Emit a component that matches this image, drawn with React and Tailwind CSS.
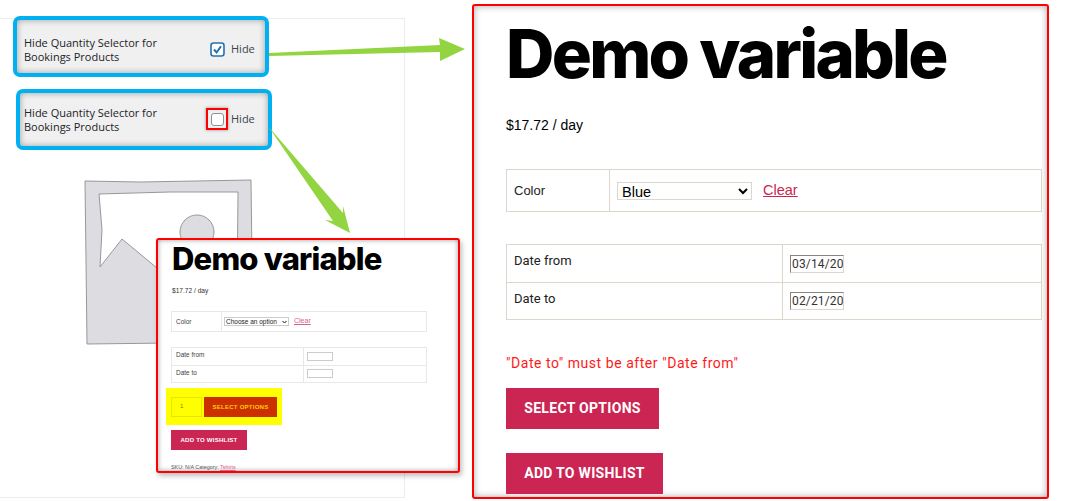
const Callout = ({ className, checked }) => (
  <div className={`absolute flex h-[61px] w-[256px] items-center rounded-[7px] border-4 border-[#00b0f0] bg-[#f0f0f0] shadow-[inset_0_0_6px_rgba(0,0,0,0.35)] ${className}`}>
    <p className="w-[186px] font-['Open_Sans',sans-serif] text-[11px] leading-[14px] text-[#1d2327]">
      Hide Quantity Selector for<br />Bookings Products
    </p>
    {checked ? (
      <svg width="15" height="15" viewBox="0 0 15 15" className="shrink-0">
        <rect x="1" y="1" width="13" height="13" rx="2.5" fill="#fff" stroke="#2271b1" strokeWidth="1.6" />
        <path d="M4 7.5l2.6 3L11 4.2" fill="none" stroke="#2271b1" strokeWidth="2" />
      </svg>
    ) : (
      <span className="relative flex h-[15px] w-[15px] shrink-0 items-center justify-center">
        <span className="h-[13px] w-[13px] rounded-[3px] border border-[#8c8f94] bg-white" />
        <span className="absolute -top-[4px] -left-[4px] h-[22px] w-[22px] border-2 border-[#ff0000] shadow-[0_0_3px_rgba(0,0,0,0.4)]" />
      </span>
    )}
    <span className="ml-[6px] font-['Open_Sans',sans-serif] text-[11px] text-[#3c434a]">Hide</span>
  </div>
)

const Arrows = () => (
  <svg width="1073" height="501" viewBox="0 0 1073 501" className="absolute top-0 left-0">
    <polygon points="269,53 440,45 439,38 465,49 440,61 440,52 269,56" fill="#92d540" />
    <polygon points="268,126 343,213 343,206 350,233 325,220 333,221" fill="#92d540" />
  </svg>
)

const Placeholder = () => (
  <svg width="170" height="168" viewBox="84 178 170 168" className="absolute top-[178px] left-[84px]">
    <polygon points="85,181 140,182 251,180 252,258 251,340 170,343 87,344 86,260" fill="#dddde1" stroke="#98989c" strokeWidth="1" />
    <polygon points="99,194 170,192 238,192 237,300 157,268 122,239 100,267 102,230" fill="#fff" stroke="#98989c" strokeWidth="1" />
    <circle cx="197" cy="232" r="17" fill="#dddde1" stroke="#98989c" strokeWidth="1" />
  </svg>
)

const SmallPanel = () => (
  <div className="absolute top-[238px] left-[156px] h-[235px] w-[304px] overflow-hidden rounded-[3px] border-2 border-[#ff0000] bg-white pt-[1px] pl-[13px] shadow-[inset_0_0_5px_rgba(0,0,0,0.4),2px_3px_5px_rgba(0,0,0,0.25)] font-['Liberation_Sans',sans-serif]">
    <h2 className="mt-[2px] ml-[1px] font-['Inter',sans-serif] text-[31px] leading-[32px] font-extrabold tracking-[-0.8px] text-black">Demo variable</h2>
    <p className="ml-[1px] mt-[11px] text-[6.6px] leading-[10px] text-[#333]">$17.72 / day</p>
    <table className="mt-[15px] h-[21px] w-[256px] table-fixed border-collapse text-[6.5px] text-[#444]">
      <tbody>
        <tr>
          <td className="w-[50px] border border-[#e8e8e4] pl-[4px]">Color</td>
          <td className="border border-[#e8e8e4] pl-[2px]">
            <span className="flex items-center">
              <span className="flex h-[9px] w-[65px] items-center justify-between border border-[#ccc] px-[1px] text-[6.5px] leading-[7px] text-[#222]">
                Choose an option
                <svg width="5" height="4" viewBox="0 0 5 4"><path d="M0.5 1l2 2 2-2" fill="none" stroke="#111" strokeWidth="1" /></svg>
              </span>
              <span className="ml-[5px] text-[7px] text-[#d9608a] underline">Clear</span>
            </span>
          </td>
        </tr>
      </tbody>
    </table>
    <table className="mt-[15px] h-[36px] w-[256px] table-fixed border-collapse text-[6.5px] text-[#444]">
      <tbody>
        {['Date from', 'Date to'].map((label) => (
          <tr key={label}>
            <td className="w-[132px] border border-[#e8e8e4] pl-[4px] align-top leading-[14px]">{label}</td>
            <td className="border border-[#e8e8e4] pl-[3px]">
              <span className="block h-[9px] w-[26px] border border-[#ccc]" />
            </td>
          </tr>
        ))}
      </tbody>
    </table>
    <div className="-ml-[5px] mt-[5px] flex h-[37px] w-[116px] items-center gap-[2px] bg-[#ffff00] pl-[5px]">
      <span className="flex h-[20px] w-[31px] items-center border border-[#e6e600] pl-[8px] text-[6px] text-[#808000]">1</span>
      <span className="flex h-[20px] w-[73px] items-center justify-center bg-[#cc3000] text-[6.1px] font-bold tracking-[0.2px] text-[#ffcc00]">SELECT OPTIONS</span>
    </div>
    <div className="mt-[5px] flex h-[20px] w-[76px] items-center justify-center bg-[#cb2553] text-[6.1px] font-bold tracking-[0.2px] text-white">ADD TO WISHLIST</div>
    <p className="mt-[13px] text-[5.4px] leading-[8px] text-[#555]">
      SKU: N/A Category: <span className="text-[#d9608a] underline">Tshirts</span>
    </p>
  </div>
)

const BigPanel = () => (
  <div className="absolute top-[4px] left-[472px] h-[495px] w-[577px] overflow-hidden rounded-[3px] border-2 border-[#ff0000] bg-white pl-[32px] shadow-[inset_0_0_7px_rgba(0,0,0,0.35)] font-['Roboto',sans-serif]">
    <h1 className="mt-[13px] font-['Inter',sans-serif] text-[67px] leading-[70px] font-extrabold tracking-[-2.75px] text-black">Demo variable</h1>
    <p className="mt-[27px] font-['Liberation_Sans',sans-serif] text-[14px] leading-[18px] text-black">$17.72 / day</p>
    <table className="mt-[35px] h-[43px] w-[536px] table-fixed border-collapse text-[13px] text-[#222]">
      <tbody>
        <tr>
          <td className="w-[103px] border border-[#dcd7ca] pl-[7px] font-['Liberation_Sans',sans-serif]">Color</td>
          <td className="border border-[#dcd7ca] pl-[7px]">
            <div className="flex items-center">
              <select defaultValue="Blue" className="h-[18px] w-[135px] border border-[#dcd7ca] bg-white pb-[2px] font-['Liberation_Sans',sans-serif] text-[14.5px] leading-[14px] text-black">
                <option>Blue</option>
              </select>
              <a className="ml-[11px] font-['Liberation_Sans',sans-serif] text-[14.5px] text-[#cb2553] underline">Clear</a>
            </div>
          </td>
        </tr>
      </tbody>
    </table>
    <table className="mt-[32px] h-[76px] w-[536px] table-fixed border-collapse text-[13px] text-[#222]">
      <tbody>
        {[['Date from', '03/14/20'], ['Date to', '02/21/20']].map(([label, value]) => (
          <tr key={label}>
            <td className="w-[276px] border border-[#dcd7ca] pt-[7px] pl-[7px] align-top leading-[18px]">{label}</td>
            <td className="border border-[#dcd7ca] pl-[7px]">
              <input readOnly value={value} className="h-[18px] w-[54px] border border-[#dcd7ca] border-t-[#8a8578] border-l-[#8a8578] pl-[1px] font-['Roboto',sans-serif] text-[12px] tracking-[0.15px] text-[#333]" />
            </td>
          </tr>
        ))}
      </tbody>
    </table>
    <p className="mt-[33px] text-[14px] leading-[20px] tracking-[0.55px] text-[#ff1a1a]">"Date to" must be after "Date from"</p>
    <div className="mt-[15px] flex h-[41px] w-[153px] items-center justify-center bg-[#cb2553] text-[14px] font-bold tracking-[0.3px] text-white">SELECT OPTIONS</div>
    <div className="mt-[24px] flex h-[41px] w-[157px] items-center justify-center bg-[#cb2553] text-[14px] font-bold tracking-[0.3px] text-white">ADD TO WISHLIST</div>
  </div>
)

const App = () => {
  return (
    <div className="relative h-[501px] w-[1073px] overflow-hidden bg-white">
      <div className="absolute top-[18px] left-0 h-[480px] w-[405px] border-y border-r border-[#ececec]" />
      <Placeholder />
      <Callout className="top-[16px] left-[13px] pt-[6px] pl-[7px]" checked />
      <Callout className="top-[89px] left-[16px] pl-[4px]" />
      <Arrows />
      <SmallPanel />
      <BigPanel />
    </div>
  )
}

export default App
